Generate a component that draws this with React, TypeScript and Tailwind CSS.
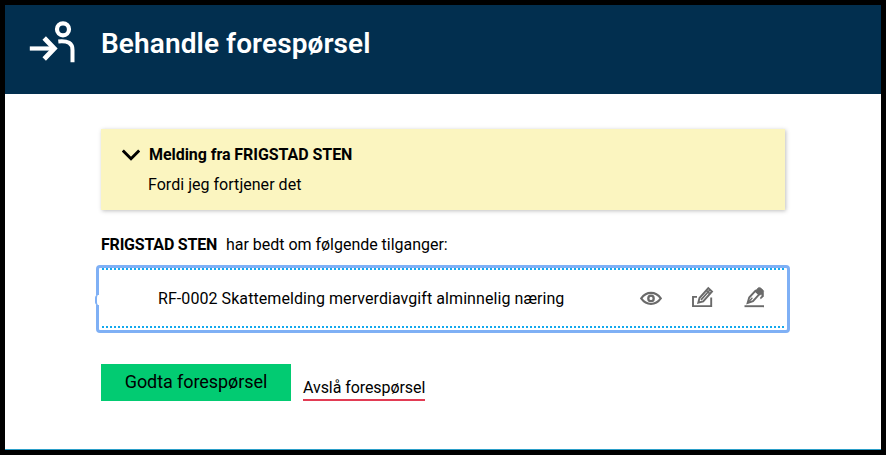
import React from "react";

function EnterPersonIcon() {
  return (
    <svg width="48" height="44" viewBox="0 0 48 44" fill="none" stroke="#fff" className="shrink-0">
      <circle cx="34" cy="9.3" r="6" strokeWidth="4.200" />
      <path d="M29.300 21.400c9.700-1 14.200 1.900 14.200 8.600v12.200" strokeWidth="4" />
      <path d="M0.800 28.500H25" strokeWidth="4.200" />
      <path d="M15.200 18 25.300 28.500 15.200 39" strokeWidth="4.800" />
    </svg>
  );
}

function EyeIcon() {
  return (
    <svg width="24" height="24" viewBox="0 0 24 24" fill="none" stroke="#6a6a6a">
      <path d="M2.200 12.400C7.500 5 16.500 5 21.800 12.400 16.500 19.800 7.500 19.800 2.200 12.400Z" strokeWidth="2.100" />
      <circle cx="12" cy="12.400" r="2.700" strokeWidth="2.300" />
    </svg>
  );
}

function EditIcon() {
  return (
    <svg width="24" height="24" viewBox="0 0 24 24" fill="none" stroke="#6a6a6a">
      <path d="M6 10.900H2V20.100H20.200V11.500" strokeWidth="1.900" />
      <path d="M7.300 16.700 8.500 12 17.300 2.100 21 5.500 12.200 15.300Z" strokeWidth="1.900" />
      <path d="M10 13.900 18.800 4M15.300 4.400 19 7.800" strokeWidth="1.700" />
    </svg>
  );
}

function SignIcon() {
  return (
    <svg width="24" height="24" viewBox="0 0 24 24" fill="none" stroke="#6a6a6a">
      <path d="M1.500 20.200H21" strokeWidth="1.900" />
      <path d="M4.600 16.900 6.200 11.600 12.400 4.800 16.200 8.300 10 15.100Z" strokeWidth="1.900" />
      <path d="M12 5.200 15.200 1.800Q16.500 1 17.800 2L20 4Q21 5 20.500 6.500V10.500L17.800 12.800 17.200 12 18.800 9.800V8.500L15.800 9Z" fill="#6a6a6a" strokeWidth="0.600" />
      <path d="M4.800 16.700 9.400 11.700" strokeWidth="1.300" />
    </svg>
  );
}

function DottedRule() {
  return (
    <div className="ml-[3px] mr-[3px] h-[2px] bg-[repeating-linear-gradient(90deg,#12a9ee_0_2px,transparent_2px_4px)]" />
  );
}

export default function App() {
  return (
    <div className="h-[455px] w-[886px] bg-black px-[5px] pt-[5px] font-['Roboto','Liberation_Sans',sans-serif] text-base text-black">
      <div className="flex h-[445px] flex-col border-b border-[#2b9fc9] bg-white">
        <header className="flex h-[89px] shrink-0 bg-[#022f4f] pl-6 pt-[15px]">
          <EnterPersonIcon />
          <h1 className="ml-6 mt-[8px] whitespace-nowrap text-[28px] font-semibold leading-8 tracking-[0.1px] text-white">
            Behandle forespørsel
          </h1>
        </header>
        <main className="flex flex-col pl-24 pt-[35px]">
          <section className="flex h-[81px] w-[684px] bg-[#fbf5c0] pl-[21px] pt-[16px] shadow-[1px_1px_4px_rgba(0,0,0,0.25)]">
            <svg width="18" height="12" viewBox="0 0 18 12" fill="none" stroke="#000" strokeWidth="3" className="mt-[4px]">
              <path d="M0.800 1.500 9 9.700 17.200 1.500" />
            </svg>
            <div className="ml-[8px] whitespace-nowrap leading-5">
              <h2 className="pl-px font-bold tracking-[-0.06px]">Melding fra FRIGSTAD STEN</h2>
              <p className="mt-[10px] tracking-[0.03px]">Fordi jeg fortjener det</p>
            </div>
          </section>
          <p className="mt-[25px] flex h-5 whitespace-nowrap leading-5">
            <strong className="w-[125px] font-bold tracking-[-0.2px]">FRIGSTAD STEN</strong>
            <span className="tracking-[-0.02px]">har bedt om følgende tilganger:</span>
          </p>
          <div className="relative -ml-[5px] mt-[10px] flex h-[68px] w-[694px] flex-col rounded-[4px] border-[3px] border-[#7fb0f5]">
            <span className="absolute -left-[4px] top-[27px] h-[10px] w-[4px] rounded-l-[3px] border-l-2 border-[#7fb0f5] bg-white" />
            <DottedRule />
            <div className="flex h-[56px] items-center pl-[59px]">
              <span className="w-[481px] whitespace-nowrap pt-0.5 leading-5 tracking-[0.07px]">
                RF-0002 Skattemelding merverdiavgift alminnelig næring
              </span>
              <div className="flex gap-[28px]">
                <EyeIcon />
                <EditIcon />
                <SignIcon />
              </div>
            </div>
            <DottedRule />
          </div>
          <div className="mt-[31px] flex h-[37px] items-end gap-3">
            <button className="h-[37px] w-[190px] whitespace-nowrap bg-[#02cb72] pb-px text-[18px] leading-5 tracking-[-0.07px]">
              Godta forespørsel
            </button>
            <a className="h-[24px] w-[122px] whitespace-nowrap border-b-2 border-[#e23b53] pt-px leading-[20px] tracking-[-0.07px]">
              Avslå forespørsel
            </a>
          </div>
        </main>
      </div>
    </div>
  );
}
